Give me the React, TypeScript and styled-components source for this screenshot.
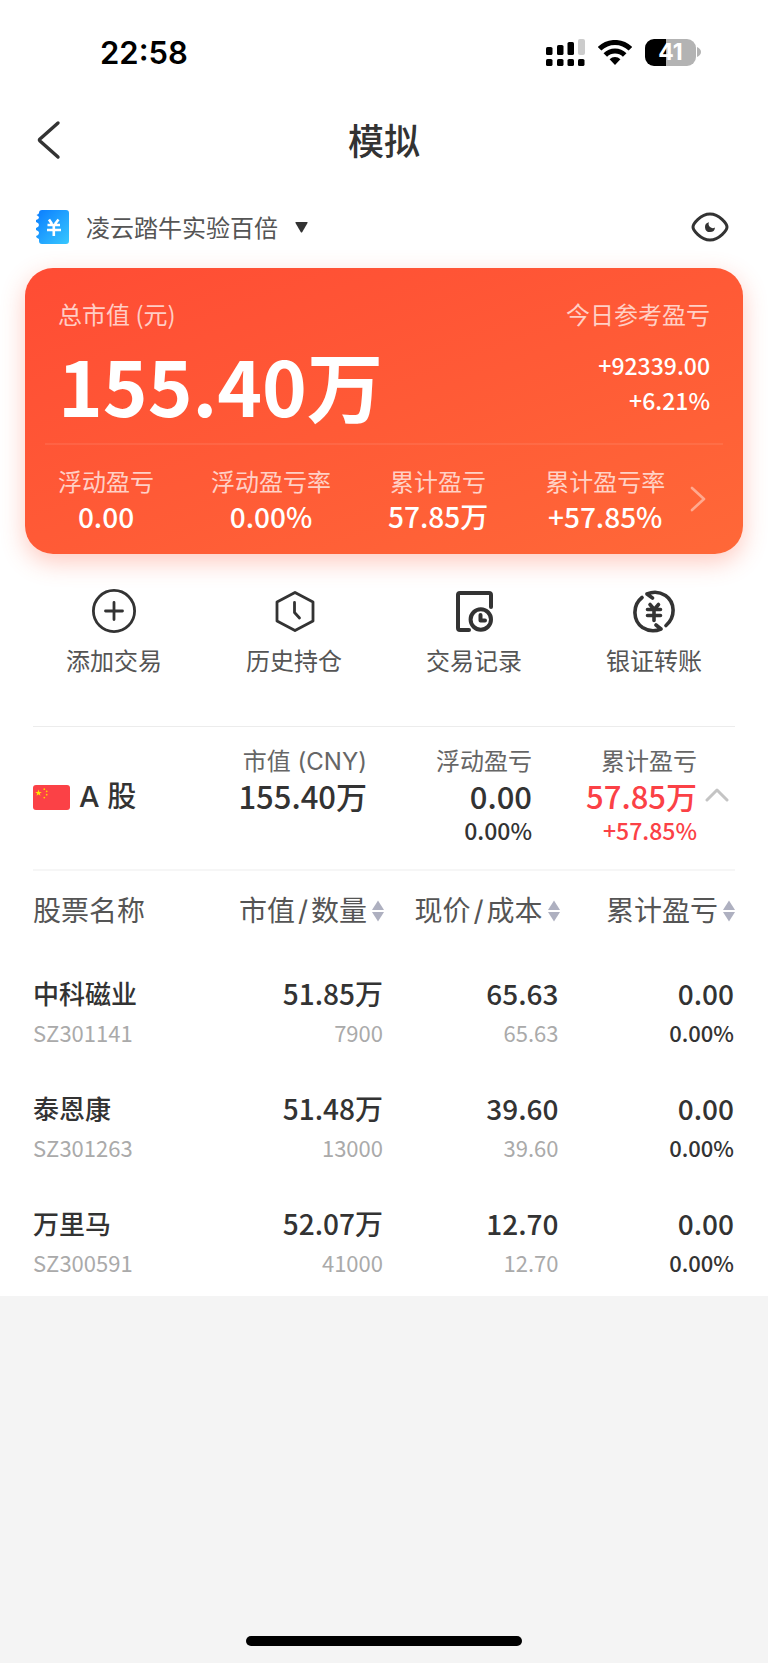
import React from "react";
import styled, { createGlobalStyle } from "styled-components";

const GlobalStyle = createGlobalStyle`
  * { box-sizing: border-box; }
  html, body { margin: 0; padding: 0; background: #f4f4f4; }
  body { font-family: "Noto Sans CJK SC", sans-serif; color: #333; }
  button { border: 0; padding: 0; background: none; color: inherit; font: inherit; cursor: pointer; }
  svg { display: block; flex: none; }
`;

const numeric = `font-family: "Noto Sans CJK SC", sans-serif; font-weight: 500;`;
const latin = `font-family: Inter, "Noto Sans CJK SC", sans-serif;`;

const Screen = styled.div`
  min-height: 100vh;
  display: flex;
  flex-direction: column;
`;

const Sheet = styled.main`
  background: #fff;
`;

const StatusBar = styled.header`
  ${latin}
  height: 100px;
  padding: 4px 67px 0 100px;
  display: flex;
  align-items: center;
  justify-content: space-between;
`;

const Clock = styled.time`
  padding-top: 2px;
  font-size: 31px;
  line-height: 40px;
  font-weight: 600;
  color: #000;
`;

const StatusIcons = styled.div`
  display: flex;
  align-items: center;
  gap: 13px;
`;

const Battery = styled.div`
  display: flex;
  align-items: center;
  gap: 1px;
`;

const BatteryBody = styled.div`
  width: 51px;
  height: 27px;
  border-radius: 9px;
  background: linear-gradient(90deg, #000 41%, #b3b3b3 41%);
  color: #fff;
  font-size: 23px;
  line-height: 27px;
  font-weight: 700;
  text-align: center;
`;

const NavBar = styled.nav`
  height: 80px;
  padding: 0 36px;
  display: grid;
  grid-template-columns: 1fr auto 1fr;
  align-items: center;
`;

const BackButton = styled.button`
  justify-self: start;
`;

const Title = styled.h1`
  margin: 0;
  font-size: 36px;
  line-height: 46px;
  padding-bottom: 2px;
  font-weight: 500;
`;

const AccountRow = styled.div`
  height: 88px;
  padding: 6px 39px 0 36px;
  display: flex;
  align-items: center;
  justify-content: space-between;
`;

const AccountButton = styled.button`
  display: flex;
  align-items: center;
  color: #555;
  font-size: 24px;
  line-height: 32px;
`;

const AccountName = styled.span`
  margin: 0 17px;
`;

const Card = styled.section`
  margin: 0 25px;
  padding: 29px 20px 20px;
  border-radius: 28px;
  background: linear-gradient(160deg, #ff4c34, #ff6838);
  box-shadow: 0 8px 24px rgba(255, 90, 60, 0.32);
  color: #fff;
`;

const CardTop = styled.div`
  height: 148px;
  padding: 0 13px;
  display: flex;
  justify-content: space-between;
  border-bottom: 2px solid rgba(255, 255, 255, 0.08);
`;

const CardLabel = styled.div`
  font-size: 24px;
  line-height: 34px;
  color: rgba(255, 255, 255, 0.72);
`;

const TotalValue = styled.div`
  ${numeric}
  font-size: 76px;
  line-height: 106px;
  font-weight: 700;
`;

const Today = styled.div`
  text-align: right;
`;

const TodayFigures = styled.div`
  ${numeric}
  margin-top: 17px;
  font-size: 23px;
  line-height: 35px;
`;

const CardStats = styled.div`
  padding: 19px 17px 0 13px;
  display: flex;
  align-items: center;
  justify-content: space-between;
`;

const StatGroup = styled.div`
  display: flex;
  gap: 57px;
`;

const Stat = styled.div`
  text-align: center;
  white-space: nowrap;
`;

const StatValue = styled.div`
  ${numeric}
  font-size: 28px;
  line-height: 36px;
`;

const DetailButton = styled.button`
  color: #ffa98f;
`;

const Actions = styled.div`
  margin: 0 24px;
  padding-top: 34px;
  height: 172px;
  display: grid;
  grid-template-columns: repeat(4, 1fr);
  align-items: start;
`;

const ActionButton = styled.button`
  display: flex;
  flex-direction: column;
  align-items: center;
  gap: 8px;
  font-size: 24px;
  line-height: 36px;
`;

const ActionLabel = styled.span`
  color: #555;
`;

const Market = styled.section`
  ${latin}
  margin: 0 33px;
  height: 145px;
  padding-top: 19px;
  border-top: 1px solid #ececec;
  border-bottom: 2px solid #f6f6f6;
  display: grid;
  grid-template-columns: 1fr 160px 165px 165px 38px;
`;

const MarketName = styled.h2`
  margin: 32px 0 0;
  display: flex;
  align-items: center;
  align-self: start;
  gap: 9px;
  font-size: 29px;
  line-height: 38px;
  font-weight: 500;
`;

const MarketFigure = styled.div<{ $up?: boolean }>`
  text-align: right;
  white-space: nowrap;
  color: ${(p) => (p.$up ? "#fb4146" : "#333")};
`;

const MarketLabel = styled.div`
  font-size: 24px;
  line-height: 32px;
  color: #666;
`;

const MarketValue = styled.div`
  ${numeric}
  font-size: 31px;
  line-height: 36px;
`;

const MarketRate = styled.div`
  ${numeric}
  font-size: 23px;
  line-height: 32px;
`;

const CollapseButton = styled.button`
  height: 38px;
  margin-top: 30px;
  padding-right: 6px;
  display: flex;
  align-items: center;
  justify-content: flex-end;
`;

const Holdings = styled.table`
  width: calc(100% - 66px);
  margin: 0 33px;
  border-collapse: collapse;
  table-layout: fixed;
`;

const HeadCell = styled.th<{ $align?: string }>`
  ${latin}
  height: 80px;
  padding: 0;
  font-weight: 400;
  font-size: 28px;
  line-height: 38px;
  color: #555;
  text-align: ${(p) => p.$align ?? "right"};
  white-space: nowrap;
`;

const SortButton = styled.button`
  display: inline-flex;
  align-items: center;
  gap: 5px;
`;

const Slash = styled.span`
  margin: 0 3px;
`;

const Cell = styled.td<{ $align?: string }>`
  height: 115px;
  padding: 7px 1px 0 0;
  vertical-align: middle;
  text-align: ${(p) => p.$align ?? "right"};
`;

const StockName = styled.div`
  font-size: 26px;
  line-height: 40px;
  font-weight: 500;
`;

const Amount = styled.div`
  ${numeric}
  font-size: 28px;
  line-height: 40px;
`;

const Detail = styled.div<{ $strong?: boolean }>`
  ${numeric}
  font-size: 22px;
  line-height: 38px;
  font-weight: ${(p) => (p.$strong ? 500 : 400)};
  color: ${(p) => (p.$strong ? "#333" : "#aaa")};
`;

const HomeArea = styled.footer`
  margin-top: auto;
  padding-bottom: 17px;
  display: flex;
  justify-content: center;
`;

const HomeIndicator = styled.div`
  width: 36%;
  height: 10px;
  border-radius: 5px;
  background: #000;
`;

const SignalIcon = () => (
  <svg width="39" height="27" viewBox="0 0 39 27" aria-hidden="true">
    <rect x="0" y="8" width="6.5" height="8" rx="1.6" />
    <rect x="11" y="6" width="6.500" height="10" rx="1.6" />
    <rect x="21.500" y="3" width="6.500" height="13" rx="1.6" />
    <rect x="32" y="0" width="7" height="16" rx="2" fill="#ccc" />
    {[0, 11, 21.5, 32].map((x) => (
      <rect key={x} x={x} y="20" width="6.5" height="7" rx="1.6" />
    ))}
  </svg>
);

const WifiIcon = () => (
  <svg width="34" height="25" viewBox="0 0 34 25" aria-hidden="true">
    <g fill="none" stroke="#000" strokeWidth="5">
      <path d="M1.6 8.8 A21.8 21.8 0 0 1 32.4 8.8" />
      <path d="M7.3 15 A13.7 13.7 0 0 1 26.7 15" />
    </g>
    <path d="M11.6 19.2 A7.6 7.6 0 0 1 22.4 19.2 L17 25 Z" />
  </svg>
);

const LedgerIcon = () => (
  <svg width="33" height="34" viewBox="0 0 33 34" aria-hidden="true">
    <defs>
      <linearGradient id="ledger" x1="0" y1="0" x2="1" y2="1">
        <stop offset="0" stopColor="#0a7cff" />
        <stop offset="1" stopColor="#38c8ff" />
      </linearGradient>
    </defs>
    <path
      fill="url(#ledger)"
      d="M6 0H30Q33 0 33 3V31Q33 34 30 34H6Q3 34 3 31V29Q0 28 0 26Q3 25 3 22.500Q3 21 0 20V18Q3 17 3 15Q3 13 0 12V10Q3 9 3 7.500Q3 6 0.500 5Q3 4 3 3Q3 0 6 0Z"
    />
    <path
      fill="none"
      stroke="#fff"
      strokeWidth="2.6"
      d="M13 9.500L16 14M22.500 9.500L19 14M11.500 15H24M11 20H25M17.800 15V26"
    />
  </svg>
);

const EyeIcon = () => (
  <svg width="38" height="30" viewBox="0 0 38 30" aria-hidden="true">
    <path
      fill="none"
      stroke="#333"
      strokeWidth="3"
      strokeLinejoin="round"
      d="M2 15C2 12 9.500 2 19 2S36 12 36 15S28.500 28 19 28S2 18 2 15Z"
    />
    <path fill="#333" d="M18 10.200A5 5 0 1 0 24 15.500A4.200 4.200 0 0 1 18 10.200Z" />
  </svg>
);

const AddIcon = () => (
  <svg width="46" height="46" viewBox="0 0 46 46" fill="none" stroke="#333" strokeWidth="2.8" strokeLinecap="round" aria-hidden="true">
    <circle cx="23" cy="23" r="20.6" />
    <path d="M14.500 23H31.500M23 14.500V31.500" />
  </svg>
);

const HistoryIcon = () => (
  <svg width="46" height="46" viewBox="0 0 46 46" fill="none" stroke="#333" strokeWidth="2.8" strokeLinecap="round" strokeLinejoin="round" aria-hidden="true">
    <path d="M24 4.500L42 14V33L24 42.500L6 33V14Z" />
    <path d="M23.500 14.500V24.500L28.500 30" />
  </svg>
);

const RecordIcon = () => (
  <svg width="46" height="46" viewBox="0 0 46 46" fill="none" stroke="#333" strokeWidth="4" strokeLinecap="round" strokeLinejoin="round" aria-hidden="true">
    <path d="M18 42H9Q7 42 7 40V7Q7 5 9 5H38Q40 5 40 7V19" />
    <circle cx="29.800" cy="31.500" r="10.200" />
    <path d="M29.500 27V32.500H34" />
  </svg>
);

const TransferIcon = () => (
  <svg width="46" height="46" viewBox="0 0 46 46" fill="none" stroke="#333" strokeWidth="3.6" strokeLinecap="round" strokeLinejoin="round" aria-hidden="true">
    <path d="M11 9.500C1 17.500 2 33 11.500 39.500C17 43 24 43.500 30 41L25 37" />
    <path d="M35 37.500C45 29 44 14 34.500 7.500C29 4 22 3.500 16 6L21.500 10" />
    <path d="M19 16.500L22 20M27.500 16.500L24.500 20M16.500 21.500H29.500M16.500 27.500H29.500M23 21.500V32.500" />
  </svg>
);

const FlagIcon = () => (
  <svg width="37" height="25" viewBox="0 0 37 25" aria-hidden="true">
    <rect width="37" height="25" rx="3" fill="#fb4146" />
    <path
      fill="#ffe600"
      d="M5.500 4.500L6.300 6.900H8.800L6.800 8.400L7.500 10.800L5.500 9.300L3.500 10.800L4.200 8.400L2.200 6.900H4.700Z"
    />
    <g fill="#ffd000">
      <circle cx="11.300" cy="4.200" r="0.900" />
      <circle cx="13.700" cy="6.300" r="0.900" />
      <circle cx="13.700" cy="9.700" r="0.900" />
      <circle cx="11.300" cy="12.600" r="0.900" />
    </g>
  </svg>
);

const SortIcon = () => (
  <svg width="12" height="22" viewBox="0 0 12 22" fill="#aeb0c0" aria-hidden="true">
    <path d="M6 0.500L12 10H0Z" />
    <path d="M6 21.500L12 12H0Z" />
  </svg>
);

const stats = [
  { label: "浮动盈亏", value: "0.00" },
  { label: "浮动盈亏率", value: "0.00%" },
  { label: "累计盈亏", value: "57.85万" },
  { label: "累计盈亏率", value: "+57.85%" },
];

const actions = [
  { label: "添加交易", Icon: AddIcon },
  { label: "历史持仓", Icon: HistoryIcon },
  { label: "交易记录", Icon: RecordIcon },
  { label: "银证转账", Icon: TransferIcon },
];

const columns = [["市值", "数量"], ["现价", "成本"], ["累计盈亏"]];

const holdings = [
  { name: "中科磁业", code: "SZ301141", value: "51.85万", count: "7900", price: "65.63", cost: "65.63" },
  { name: "泰恩康", code: "SZ301263", value: "51.48万", count: "13000", price: "39.60", cost: "39.60" },
  { name: "万里马", code: "SZ300591", value: "52.07万", count: "41000", price: "12.70", cost: "12.70" },
];

export default function App() {
  return (
    <Screen>
      <GlobalStyle />
      <Sheet>
        <StatusBar>
          <Clock>22:58</Clock>
          <StatusIcons>
            <SignalIcon />
            <WifiIcon />
            <Battery>
              <BatteryBody>41</BatteryBody>
              <svg width="4" height="10" viewBox="0 0 4 10" fill="#b3b3b3" aria-hidden="true">
                <path d="M0 0Q4 2 4 5T0 10Z" />
              </svg>
            </Battery>
          </StatusIcons>
        </StatusBar>

        <NavBar>
          <BackButton aria-label="返回">
            <svg width="26" height="40" viewBox="0 0 26 40" fill="none" stroke="#333" strokeWidth="3.4" strokeLinecap="round" strokeLinejoin="round">
              <path d="M22 3L4 19Q3 20 4 21L22 37" />
            </svg>
          </BackButton>
          <Title>模拟</Title>
        </NavBar>

        <AccountRow>
          <AccountButton>
            <LedgerIcon />
            <AccountName>凌云踏牛实验百倍</AccountName>
            <svg width="13" height="11" viewBox="0 0 13 11" fill="#333" aria-hidden="true">
              <path d="M1 0H12Q13 0 12.500 1L7.300 10Q6.500 11 5.700 10L0.500 1Q0 0 1 0Z" />
            </svg>
          </AccountButton>
          <button aria-label="隐藏金额">
            <EyeIcon />
          </button>
        </AccountRow>

        <Card>
          <CardTop>
            <div>
              <CardLabel>总市值 (元)</CardLabel>
              <TotalValue>155.40万</TotalValue>
            </div>
            <Today>
              <CardLabel>今日参考盈亏</CardLabel>
              <TodayFigures>
                <div>+92339.00</div>
                <div>+6.21%</div>
              </TodayFigures>
            </Today>
          </CardTop>
          <CardStats>
            <StatGroup>
              {stats.map((s) => (
                <Stat key={s.label}>
                  <CardLabel>{s.label}</CardLabel>
                  <StatValue>{s.value}</StatValue>
                </Stat>
              ))}
            </StatGroup>
            <DetailButton aria-label="查看详情">
              <svg width="16" height="26" viewBox="0 0 16 26" fill="none" stroke="currentColor" strokeWidth="2.6" strokeLinecap="round" strokeLinejoin="round">
                <path d="M2 2L14 13L2 24" />
              </svg>
            </DetailButton>
          </CardStats>
        </Card>

        <Actions>
          {actions.map(({ label, Icon }) => (
            <ActionButton key={label}>
              <Icon />
              <ActionLabel>{label}</ActionLabel>
            </ActionButton>
          ))}
        </Actions>

        <Market>
          <MarketName>
            <FlagIcon />
            <span>A 股</span>
          </MarketName>
          <MarketFigure>
            <MarketLabel>市值 (CNY)</MarketLabel>
            <MarketValue>155.40万</MarketValue>
          </MarketFigure>
          <MarketFigure>
            <MarketLabel>浮动盈亏</MarketLabel>
            <MarketValue>0.00</MarketValue>
            <MarketRate>0.00%</MarketRate>
          </MarketFigure>
          <MarketFigure $up>
            <MarketLabel>累计盈亏</MarketLabel>
            <MarketValue>57.85万</MarketValue>
            <MarketRate>+57.85%</MarketRate>
          </MarketFigure>
          <CollapseButton aria-label="收起">
            <svg width="24" height="14" viewBox="0 0 24 14" fill="none" stroke="#c4c4c4" strokeWidth="3" strokeLinecap="round" strokeLinejoin="round">
              <path d="M2 12L12 2L22 12" />
            </svg>
          </CollapseButton>
        </Market>

        <Holdings>
          <thead>
            <tr>
              <HeadCell $align="left">股票名称</HeadCell>
              {columns.map(([first, second]) => (
                <HeadCell key={first}>
                  <SortButton>
                    <span>
                      {first}
                      {second && <Slash>/</Slash>}
                      {second}
                    </span>
                    <SortIcon />
                  </SortButton>
                </HeadCell>
              ))}
            </tr>
          </thead>
          <tbody>
            {holdings.map((h) => (
              <tr key={h.code}>
                <Cell $align="left">
                  <StockName>{h.name}</StockName>
                  <Detail>{h.code}</Detail>
                </Cell>
                <Cell>
                  <Amount>{h.value}</Amount>
                  <Detail>{h.count}</Detail>
                </Cell>
                <Cell>
                  <Amount>{h.price}</Amount>
                  <Detail>{h.cost}</Detail>
                </Cell>
                <Cell>
                  <Amount>0.00</Amount>
                  <Detail $strong>0.00%</Detail>
                </Cell>
              </tr>
            ))}
          </tbody>
        </Holdings>
      </Sheet>

      <HomeArea>
        <HomeIndicator />
      </HomeArea>
    </Screen>
  );
}
